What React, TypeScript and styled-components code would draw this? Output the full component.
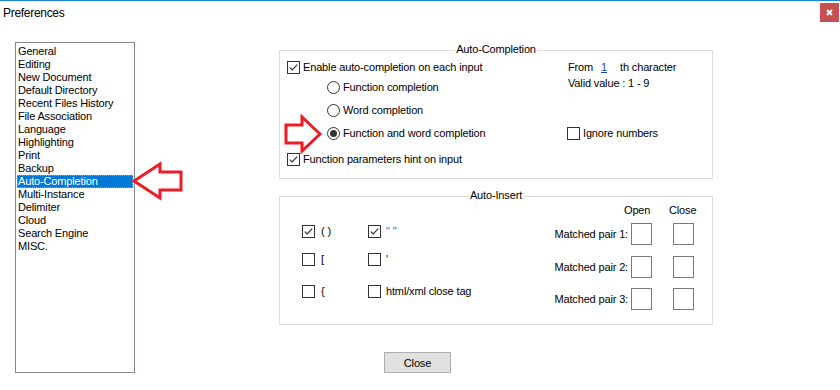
import styled, { createGlobalStyle } from 'styled-components';

const GlobalStyle = createGlobalStyle`
  body {
    margin: 0;
    background: #fff;
    font-family: 'Liberation Sans', Arial, sans-serif;
    font-size: 11px;
    letter-spacing: -0.15px;
    color: #000;
  }
`;

const categories = [
  'General',
  'Editing',
  'New Document',
  'Default Directory',
  'Recent Files History',
  'File Association',
  'Language',
  'Highlighting',
  'Print',
  'Backup',
  'Auto-Completion',
  'Multi-Instance',
  'Delimiter',
  'Cloud',
  'Search Engine',
  'MISC.',
];

const CheckBox = ({ checked }: { checked?: boolean }) => (
  <Box>
    {checked && (
      <svg width='11' height='11' viewBox='0 0 11 11'>
        <path d='M1.8 5.6 L4.2 8 L9.2 2.6' fill='none' stroke='#333' strokeWidth='1.2' />
      </svg>
    )}
  </Box>
);

const Radio = ({ checked }: { checked?: boolean }) => <Circle>{checked && <Dot />}</Circle>;

const Arrow = ({ points, box }: { points: string; box: [number, number, number, number] }) => (
  <Annotation
    $left={box[0]}
    $top={box[1]}
    width={box[2]}
    height={box[3]}
    viewBox={box.join(' ')}
  >
    <polygon points={points} fill='none' stroke='#ed1c24' strokeWidth='3' />
  </Annotation>
);

export default () => {
  return (
    <Page>
      <GlobalStyle />
      <TitleBar>
        <Title>Preferences</Title>
        <CloseX>
          <svg width='19' height='19' viewBox='0 0 19 19'>
            <path d='M7 7 L12 12 M12 7 L7 12' stroke='#fff' strokeWidth='2' />
          </svg>
        </CloseX>
      </TitleBar>
      <Body>
        <List>
          {categories.map((c) => (
            <Item key={c} $selected={c === 'Auto-Completion'}>
              {c}
            </Item>
          ))}
        </List>
        <Main>
          <Group>
            <Legend>Auto-Completion</Legend>
            <CompletionContent>
              <Column $width={280}>
                <Row>
                  <CheckBox checked />
                  <Label>Enable auto-completion on each input</Label>
                </Row>
                <Row $mt={7} $indent={40}>
                  <Radio />
                  <Label>Function completion</Label>
                </Row>
                <Row $mt={10} $indent={40}>
                  <Radio />
                  <Label>Word completion</Label>
                </Row>
                <Row $mt={10} $indent={40}>
                  <Radio checked />
                  <Label>Function and word completion</Label>
                </Row>
                <Row $mt={13}>
                  <CheckBox checked />
                  <Label>Function parameters hint on input</Label>
                </Row>
              </Column>
              <Column>
                <Row>
                  <Text>From</Text>
                  <Number>1</Number>
                  <Text>th character</Text>
                </Row>
                <Row $mt={3}>
                  <Text>Valid value : 1 - 9</Text>
                </Row>
                <Row $mt={37}>
                  <CheckBox />
                  <Label>Ignore numbers</Label>
                </Row>
              </Column>
            </CompletionContent>
          </Group>

          <Group $mt={17}>
            <Legend>Auto-Insert</Legend>
            <InsertContent>
              <PairChecks>
                <Row>
                  <CheckBox checked />
                  <Label $gap={6}>( )</Label>
                </Row>
                <Row>
                  <CheckBox checked />
                  <Label $gap={5} $color='#2d6fc0'>
                    " "
                  </Label>
                </Row>
                <Row $mt={15}>
                  <CheckBox />
                  <Label $gap={6}>[</Label>
                </Row>
                <Row $mt={15}>
                  <CheckBox />
                  <Label $gap={5}>'</Label>
                </Row>
                <Row $mt={19}>
                  <CheckBox />
                  <Label $gap={6}>{'{'}</Label>
                </Row>
                <Row $mt={19}>
                  <CheckBox />
                  <Label $gap={5}>html/xml close tag</Label>
                </Row>
              </PairChecks>
              <Matched>
                <PairGrid>
                  <span />
                  <Head $shift={-7}>Open</Head>
                  <Head $shift={-4}>Close</Head>
                </PairGrid>
                <PairGrid $rows>
                  {[1, 2, 3].map((n) => [
                    <PairLabel key={`l${n}`}>Matched pair {n}:</PairLabel>,
                    <CharInput key={`o${n}`} />,
                    <CharInput key={`c${n}`} />,
                  ])}
                </PairGrid>
              </Matched>
            </InsertContent>
          </Group>

          <Button>Close</Button>
        </Main>
      </Body>

      <Arrow
        box={[128, 158, 58, 44]}
        points='134,180 160,163 160,171 181,171 181,189 160,189 160,197'
      />
      <Arrow
        box={[282, 112, 42, 42]}
        points='320,133 302,116 302,124 286,124 286,142 302,142 302,150'
      />
    </Page>
  );
};

const Page = styled.div`
  position: relative;
  width: 840px;
  height: 390px;
  box-sizing: border-box;
  border-top: 1px solid #1883d7;
  background: #fff;
  overflow: hidden;
`;

const TitleBar = styled.div`
  display: flex;
  align-items: flex-start;
  height: 25px;
`;

const Title = styled.div`
  padding-left: 3px;
  line-height: 25px;
  font-size: 12px;
  letter-spacing: -0.3px;
`;

const CloseX = styled.div`
  margin: 2px 1px 0 auto;
  width: 19px;
  height: 19px;
  background: #c75050;
  svg {
    display: block;
  }
`;

const Body = styled.div`
  display: flex;
  padding: 16px 0 0 15px;
`;

const List = styled.div`
  width: 120px;
  height: 331px;
  box-sizing: border-box;
  border: 1px solid #828790;
  padding: 2px 1px 0 1px;
`;

const Item = styled.div<{ $selected?: boolean }>`
  height: 13px;
  line-height: 13px;
  padding-left: 1px;
  white-space: nowrap;
  background: ${(p) => (p.$selected ? '#0078d7' : 'transparent')};
  color: ${(p) => (p.$selected ? '#fff' : '#000')};
  outline: ${(p) => (p.$selected ? '1px dotted #e8912c' : 'none')};
  outline-offset: -1px;
`;

const Main = styled.div`
  display: flex;
  flex-direction: column;
  margin-left: 144px;
  padding-top: 8px;
`;

const Group = styled.div<{ $mt?: number }>`
  position: relative;
  width: 434px;
  height: 129px;
  box-sizing: border-box;
  border: 1px solid #dcdcdc;
  margin-top: ${(p) => p.$mt || 0}px;
`;

const Legend = styled.span`
  position: absolute;
  top: -8px;
  left: 50%;
  transform: translateX(-50%);
  padding: 0 1px;
  line-height: 13px;
  background: #fff;
  white-space: nowrap;
`;

const CompletionContent = styled.div`
  display: flex;
  padding: 10px 0 0 7px;
`;

const Column = styled.div<{ $width?: number }>`
  display: flex;
  flex-direction: column;
  width: ${(p) => (p.$width ? `${p.$width}px` : 'auto')};
`;

const Row = styled.div<{ $mt?: number; $indent?: number }>`
  display: flex;
  align-items: center;
  height: 13px;
  margin-top: ${(p) => p.$mt || 0}px;
  padding-left: ${(p) => p.$indent || 0}px;
  white-space: nowrap;
`;

const Box = styled.div`
  flex: none;
  width: 13px;
  height: 13px;
  box-sizing: border-box;
  border: 1px solid #333;
  background: #fff;
  svg {
    display: block;
  }
`;

const Circle = styled.div`
  flex: none;
  display: flex;
  align-items: center;
  justify-content: center;
  width: 13px;
  height: 13px;
  box-sizing: border-box;
  border: 1px solid #333;
  border-radius: 50%;
  background: #fff;
`;

const Dot = styled.div`
  width: 7px;
  height: 7px;
  border-radius: 50%;
  background: #333;
`;

const Label = styled.span<{ $gap?: number; $color?: string }>`
  margin-left: ${(p) => p.$gap || 3}px;
  line-height: 13px;
  color: ${(p) => p.$color || '#000'};
`;

const Text = styled.span`
  margin-left: 1px;
  line-height: 13px;
`;

const Number = styled.span`
  margin: 0 12px 0 8px;
  color: #1a3fd0;
  text-decoration: underline;
  line-height: 13px;
`;

const InsertContent = styled.div`
  display: flex;
  justify-content: space-between;
  padding-right: 18px;
`;

const PairChecks = styled.div`
  display: grid;
  grid-template-columns: 66px auto;
  align-content: start;
  padding: 28px 0 0 22px;
`;

const Matched = styled.div`
  display: flex;
  flex-direction: column;
  padding-top: 7px;
`;

const PairGrid = styled.div<{ $rows?: boolean }>`
  display: grid;
  grid-template-columns: 78px 42px 21px;
  row-gap: 10.5px;
  margin-top: ${(p) => (p.$rows ? 6 : 0)}px;
`;

const Head = styled.span<{ $shift: number }>`
  margin-left: ${(p) => p.$shift}px;
  line-height: 13px;
  white-space: nowrap;
`;

const PairLabel = styled.span`
  padding-right: 3px;
  text-align: right;
  line-height: 22px;
  white-space: nowrap;
`;

const CharInput = styled.div`
  width: 21px;
  height: 22px;
  box-sizing: border-box;
  border: 1px solid #7a7a7a;
  background: #fff;
`;

const Button = styled.button`
  width: 67px;
  height: 21px;
  margin: 27px 0 0 105px;
  padding: 0;
  box-sizing: border-box;
  border: 1px solid #adadad;
  background: #e1e1e1;
  font-family: 'Liberation Sans', Arial, sans-serif;
  font-size: 11px;
  letter-spacing: -0.15px;
  color: #000;
`;

const Annotation = styled.svg<{ $left: number; $top: number }>`
  position: absolute;
  left: ${(p) => p.$left}px;
  top: ${(p) => p.$top}px;
  pointer-events: none;
`;
